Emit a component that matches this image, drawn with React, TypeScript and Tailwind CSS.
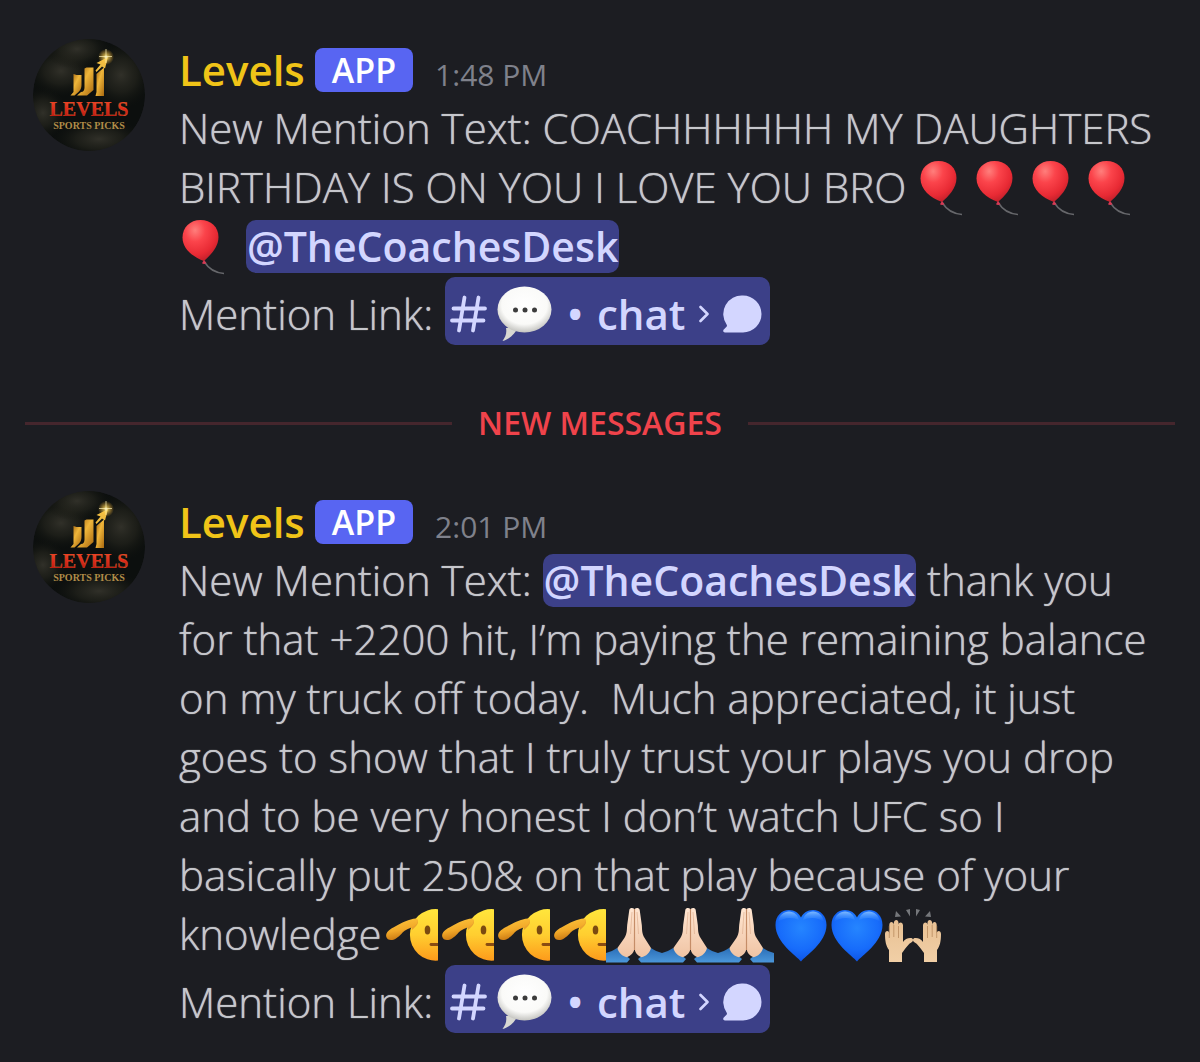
import { ReactNode } from "react";

const emojiClass = "inline-block h-14 w-14 align-[-13px]";

const Defs = () => (
  <svg width="0" height="0" className="absolute" aria-hidden="true">
    <defs>
      <radialGradient id="balloon" cx="0.35" cy="0.25" r="0.8">
        <stop offset="0" stopColor="#ff7f7c" />
        <stop offset="0.35" stopColor="#fb444b" />
        <stop offset="0.75" stopColor="#e82a34" />
        <stop offset="1" stopColor="#bd1f2a" />
      </radialGradient>
      <linearGradient id="face" x1="0" y1="0" x2="0" y2="1">
        <stop offset="0" stopColor="#ffe63c" />
        <stop offset="0.5" stopColor="#ffce30" />
        <stop offset="1" stopColor="#fd9a1b" />
      </linearGradient>
      <linearGradient id="arm" x1="0" y1="0" x2="0.3" y2="1">
        <stop offset="0" stopColor="#ffc93e" />
        <stop offset="0.6" stopColor="#f2a929" />
        <stop offset="1" stopColor="#c97812" />
      </linearGradient>
      <linearGradient id="skin" x1="0" y1="0" x2="0" y2="1">
        <stop offset="0" stopColor="#ffe6d2" />
        <stop offset="1" stopColor="#f0c4a4" />
      </linearGradient>
      <linearGradient id="sleeve" x1="0" y1="0" x2="0" y2="1">
        <stop offset="0" stopColor="#2b6fb8" />
        <stop offset="1" stopColor="#4b97da" />
      </linearGradient>
      <radialGradient id="heart" cx="0.5" cy="0.35" r="0.7">
        <stop offset="0" stopColor="#2585ff" />
        <stop offset="0.6" stopColor="#176cfb" />
        <stop offset="1" stopColor="#0b4fe0" />
      </radialGradient>
      <linearGradient id="shine" x1="0" y1="0" x2="0" y2="1">
        <stop offset="0" stopColor="#8cc4ff" stopOpacity="0.9" />
        <stop offset="1" stopColor="#3d90ff" stopOpacity="0" />
      </linearGradient>
      <linearGradient id="palm" x1="0" y1="0" x2="0" y2="1">
        <stop offset="0" stopColor="#e8c194" />
        <stop offset="1" stopColor="#f1cfa6" />
      </linearGradient>
      <radialGradient id="speech" cx="0.5" cy="0.4" r="0.6">
        <stop offset="0" stopColor="#ffffff" />
        <stop offset="0.7" stopColor="#fafaf8" />
        <stop offset="1" stopColor="#c4c4c0" />
      </radialGradient>
      <radialGradient id="smoke">
        <stop offset="0" stopColor="#35342c" stopOpacity="0.9" />
        <stop offset="0.5" stopColor="#27271f" stopOpacity="0.6" />
        <stop offset="1" stopColor="#12140f" stopOpacity="0" />
      </radialGradient>
      <linearGradient id="gold" x1="0" y1="0" x2="1" y2="1">
        <stop offset="0" stopColor="#9b5c0c" />
        <stop offset="0.45" stopColor="#efb63a" />
        <stop offset="1" stopColor="#a8680f" />
      </linearGradient>
      <linearGradient id="red" x1="0" y1="0" x2="0" y2="1">
        <stop offset="0" stopColor="#f0502c" />
        <stop offset="0.5" stopColor="#dc2a1a" />
        <stop offset="1" stopColor="#a81a10" />
      </linearGradient>
      <radialGradient id="glow">
        <stop offset="0" stopColor="#fffbd6" />
        <stop offset="0.3" stopColor="#ffd75a" stopOpacity="0.7" />
        <stop offset="1" stopColor="#ffb52e" stopOpacity="0" />
      </radialGradient>
    </defs>
  </svg>
);

const Balloon = () => (
  <svg viewBox="0 0 56 56" className={emojiClass} role="img" aria-label="balloon">
    <path d="M25.500 43c3 5 8 10.500 19.500 11.500" fill="none" stroke="#66676b" strokeWidth="1.500" />
    <path d="M21.500 1C11 1 3.500 8.500 3.500 18.500c0 11 10 19.500 21.500 23.500 6-5.500 14.500-13.500 14.500-24C39.500 8 32 1 21.500 1z" fill="url(#balloon)" />
    <path d="M25 41l-2 3.200c1.200 1 3.400 1 4.400-.3z" fill="#d63a55" />
  </svg>
);

const Salute = () => (
  <svg viewBox="0 0 56 56" className={emojiClass} role="img" aria-label="salute">
    <path d="M56 2.200A25.800 25.800 0 1 0 56 53.600z" fill="url(#face)" />
    <ellipse cx="45.500" cy="23" rx="2.800" ry="4.500" fill="#7a4a10" />
    <path d="M49 37.500h7" stroke="#8a4c12" strokeWidth="2.800" strokeLinecap="round" />
    <path d="M29 14c4-2 7-2 7 1s-3 5-6 8" fill="#e08a2c" opacity="0.7" />
    <path d="M34 11.500c-7 .5-14 4-20 7.500C8 22 3.500 25 4.200 29.500 5 33.500 10 34 14 31.500c5-3 6-6.500 10-8.500 5-2.500 10-4 11.500-7.500.8-2.200.5-4-1.500-4z" fill="url(#arm)" />
  </svg>
);

const Pray = () => (
  <svg viewBox="0 0 56 56" className={emojiClass} role="img" aria-label="folded hands">
    <path d="M0 46c4-1 8-3 11-5l13 11-3 3.500H0z" fill="url(#sleeve)" />
    <path d="M56 46c-4-1-8-3-11-5L32 52l3 3.500h21z" fill="url(#sleeve)" />
    <path d="M28.300 2c-1.500-1.500-4.500-1.300-5 1L21.200 18c-.4 4 .2 8-2.800 13l-7 10c1 4.500 5 8.500 9.500 9.200 4-1.500 7.400-5 7.400-8.700z" fill="url(#skin)" />
    <path d="M28.700 2c1.500-1.500 4.500-1.300 5 1L35.800 18c.4 4-.2 8 2.800 13l6.400 10c-1 4.500-5 8.500-9.500 9.200-4-1.500-6.800-5-6.800-8.700z" fill="url(#skin)" />
    <path d="M28.500 2v41" stroke="#c58d68" strokeWidth="1.200" />
    <path d="M26 5l-1.500 22M31 5l1.500 22" stroke="#dfb090" strokeWidth="0.700" fill="none" />
  </svg>
);

const Heart = () => (
  <svg viewBox="0 0 56 56" className={emojiClass} role="img" aria-label="blue heart">
    <path d="M27 54.500C23 49 1.500 36 1.500 18 1.500 9 7.500 3 15 3c5.500 0 10 3 12 7.500C29 6 33.500 3 39 3c7.500 0 13.500 6 13.500 15C52.500 36 31 49 27 54.500z" fill="url(#heart)" />
    <path d="M4 15C5 8 10 4.500 15 4.500S24 8 25 13c-6-3-15-3-21 2zM50 15C49 8 44 4.500 39 4.500S30 8 29 13c6-3 15-3 21 2z" fill="url(#shine)" />
  </svg>
);

const HAND =
  "M3 55V43c-3-4-4-9-4-16 0-3.500 4-4 4.300-.5V18c0-4 4.200-4 4.500 0v-2c.3-4 4.700-4 4.700 0v2c.3-3.500 4.500-3 4.500.5V35c2-3 5-4.500 8.500-4 2 .5 2 3 .5 4-4 2-6 6-8.500 9L16 46v9z";

const RaisedHands = () => (
  <svg viewBox="0 0 56 56" className={`${emojiClass} overflow-visible`} role="img" aria-label="raised hands">
    <path d={HAND} fill="url(#palm)" />
    <path d={HAND} fill="url(#palm)" transform="matrix(-1 0 0 1 54 0)" />
    <path d="M3.300 19v12M7.800 18v12M12.500 19v12M50.700 19v12M46.200 18v12M41.500 19v12" stroke="#b98b5e" strokeWidth="0.800" />
    <path d="M10 4l5 5.500-6 .5zM20 3l4-1v7.500zM34 3l-4-1v7.500zM44 4l-5 5.500 6 .5z" fill="#75777b" />
  </svg>
);

const Speech = () => (
  <svg viewBox="0 0 56 56" className="h-14 w-14" role="img" aria-label="speech balloon">
    <path d="M5.500 55c3-4 4.500-8 3.500-13l12-1c-3 7-8 12-15.500 14z" fill="#d8d8d2" />
    <ellipse cx="27.500" cy="23.500" rx="27" ry="23" fill="url(#speech)" />
    <g fill="#3c3c3c">
      <circle cx="18.500" cy="24" r="2.500" />
      <circle cx="28" cy="24" r="2.500" />
      <circle cx="37.500" cy="24" r="2.500" />
    </g>
  </svg>
);

const Avatar = () => (
  <svg viewBox="0 0 112 112" className="h-28 w-28 shrink-0 rounded-full" role="img" aria-label="Levels Sports Picks">
    <circle cx="56" cy="56" r="56" fill="#0c0f0e" />
    <ellipse cx="28" cy="32" rx="34" ry="26" fill="url(#smoke)" />
    <ellipse cx="88" cy="36" rx="32" ry="34" fill="url(#smoke)" />
    <ellipse cx="44" cy="10" rx="34" ry="20" fill="url(#smoke)" />
    <ellipse cx="66" cy="100" rx="46" ry="20" fill="url(#smoke)" />
    <ellipse cx="10" cy="74" rx="24" ry="26" fill="url(#smoke)" />
    <path d="M40.500 35l3 1h5v10c0 3-1 5-3 7l-4 3.500h-4l3-3.500z" fill="url(#gold)" />
    <path d="M51.500 29.500l2-1h7v22.500l-6.500 5.500H44l4-3.500c2.500 0 3.500-2 3.500-4.500z" fill="url(#gold)" />
    <path d="M63.500 35l7.500-6.500V57h-8.500l1-4z" fill="url(#gold)" />
    <path d="M62.500 31.500l5-6-4-1.500L75 18l-3 11.500-3-2-5.500 5.500z" fill="#f0bd42" />
    <circle cx="73" cy="18" r="8" fill="url(#glow)" />
    <path d="M73 10v14M66 17.500h13" stroke="#fff3b8" strokeWidth="0.700" />
    <text x="56" y="77" textAnchor="middle" fill="url(#red)" stroke="#f08a3c" strokeWidth="0.200" className="font-['Liberation_Serif',serif] text-[20px] font-bold text-shadow-none">
      LEVELS
    </text>
    <text x="56" y="90" textAnchor="middle" fill="#b08c48" className="font-['Liberation_Serif',serif] text-[10px] font-bold text-shadow-none">
      SPORTS PICKS
    </text>
  </svg>
);

const Mention = ({ name }: { name: string }) => (
  <a href="#mention" className="inline-block rounded-[10px] bg-[#3c4088] px-px text-[41px] leading-[53px] font-semibold text-[#d3d6ff] text-shadow-none">
    @{name}
  </a>
);

const ChannelLink = () => (
  <a href="#chat" className="flex h-[68px] items-center gap-[14px] rounded-[10px] bg-[#3c4088] pt-1.5 pr-2 pl-[5px] font-semibold text-[#d3d6ff] text-shadow-none">
    <span className="flex items-center gap-2.5">
      <svg viewBox="0 0 37 38" className="h-[38px] w-[37px]" fill="none" stroke="currentColor" strokeWidth="3.800" strokeLinecap="round" aria-hidden="true">
        <path d="M14.500 2.500L9 35.500M28.500 2.500L23 35.500M3.500 13.500h31.500M2 25.500h31.500" />
      </svg>
      <Speech />
    </span>
    <span>•</span>
    <span>chat</span>
    <svg viewBox="0 0 10 18" className="h-[18px] w-2.5" fill="none" stroke="currentColor" strokeWidth="2.600" strokeLinecap="round" strokeLinejoin="round" aria-hidden="true">
      <path d="M1.500 2L8.500 9l-7 7" />
    </svg>
    <svg viewBox="0 0 39 38" className="h-[38px] w-[39px]" fill="currentColor" aria-hidden="true">
      <path d="M20 .5a18.500 18.500 0 0 1 0 37H2c-1.800 0-2.300-2-1.200-3l2.700-2.700c.6-.7.600-1.300.2-2.100A18.500 18.500 0 0 1 20 .5z" />
    </svg>
  </a>
);

const Message = ({ time, children }: { time: string; children: ReactNode }) => (
  <article className="flex gap-[34px] pr-9 pl-[33px]">
    <Avatar />
    <div className="min-w-0 flex-1 pt-0.5">
      <header className="flex items-baseline text-shadow-none">
        <span className="leading-[57px] font-semibold text-[#f0c418]">Levels</span>
        <span className="ml-2.5 self-center rounded-[8px] bg-[#5865f2] px-[17px] text-[34px] leading-[44px] font-semibold text-white">
          APP
        </span>
        <time className="ml-[22px] text-[30px] leading-none font-normal text-[#7f818b]">{time}</time>
      </header>
      <p className="leading-[59px] whitespace-pre-wrap">{children}</p>
      <div className="mt-0.5 flex items-end gap-3 leading-[62px]">
        <span>Mention Link:</span>
        <ChannelLink />
      </div>
    </div>
  </article>
);

export default function App() {
  return (
    <main className="min-h-screen bg-[#1c1d22] pt-[39px] pb-[29px] font-['Open_Sans',sans-serif] text-[42px] font-light text-[#c6c7cc] [text-shadow:0_0_1px_currentColor]">
      <Defs />
      <Message time="1:48 PM">
        New Mention Text: COACHHHHHH MY DAUGHTERS BIRTHDAY IS ON YOU I LOVE YOU BRO{" "}
        <Balloon />
        <Balloon />
        <Balloon />
        <Balloon />
        <Balloon /> <Mention name="TheCoachesDesk" />
      </Message>

      <div className="mt-14 mb-[46px] flex items-center gap-[26px] px-[25px] text-shadow-none">
        <div className="h-[3px] flex-1 bg-[#45262d]" />
        <span className="text-[32px] leading-[44px] font-semibold text-[#f0434b]">NEW MESSAGES</span>
        <div className="h-[3px] flex-1 bg-[#45262d]" />
      </div>

      <Message time="2:01 PM">
        New Mention Text: <Mention name="TheCoachesDesk" /> thank you for that +2200 hit, I’m paying
        {" the remaining balance on my truck off today.  Much appreciated, it just goes to show that I truly trust your plays you drop and to be very honest I don’t watch UFC so I basically put 250& on that play because of your knowledge"}
        <Salute />
        <Salute />
        <Salute />
        <Salute />
        <Pray />
        <Pray />
        <Pray />
        <Heart />
        <Heart />
        <RaisedHands />
      </Message>
    </main>
  );
}
